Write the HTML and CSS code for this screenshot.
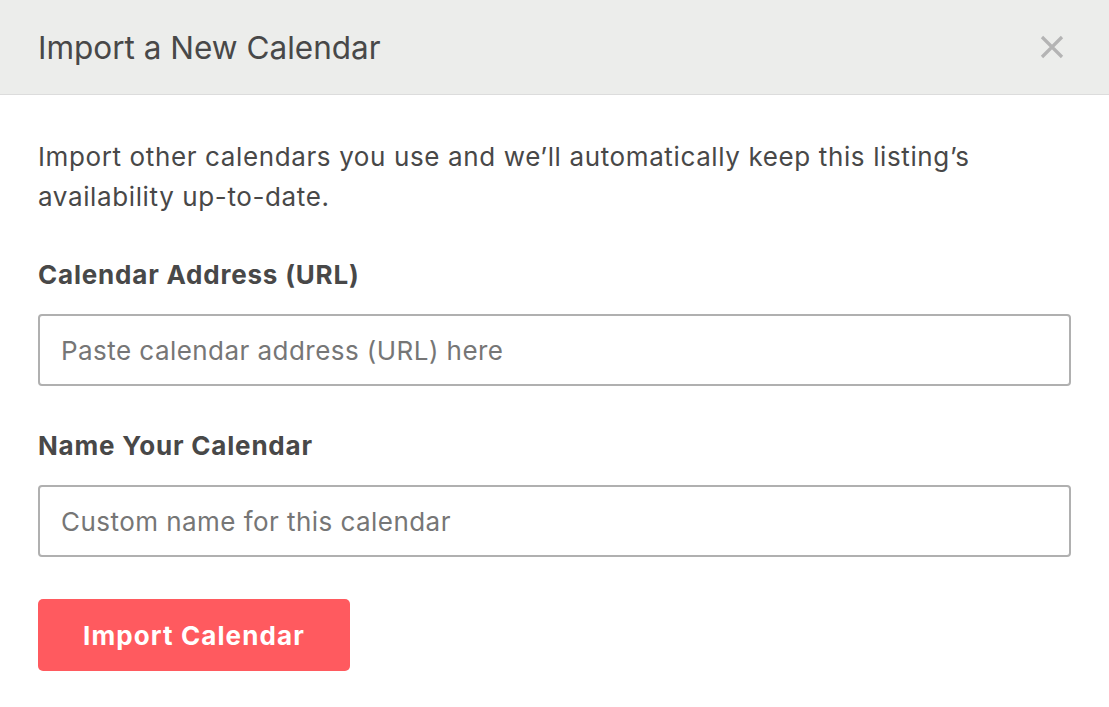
FILE: index.html
```html
<!DOCTYPE html>
<html lang="en">
<head>
<meta charset="utf-8">
<title>Import a New Calendar</title>
<link rel="stylesheet" href="styles.css">
</head>
<body>
<div class="modal">
  <header class="modal-header">
    <h1 class="modal-title">Import a New Calendar</h1>
    <button class="close" aria-label="Close">
      <svg width="24" height="24" viewBox="0 0 24 24"><path d="M2 2 L22 22 M22 2 L2 22" stroke="#b4b4b4" stroke-width="3.2" fill="none"/></svg>
    </button>
  </header>
  <div class="modal-body">
    <p class="intro">Import other calendars you use and we’ll automatically keep this listing’s availability up-to-date.</p>
    <label class="field-label" for="url">Calendar Address (URL)</label>
    <input class="field" id="url" type="text" placeholder="Paste calendar address (URL) here">
    <label class="field-label" for="name">Name Your Calendar</label>
    <input class="field" id="name" type="text" placeholder="Custom name for this calendar">
    <button class="primary">Import Calendar</button>
  </div>
</div>
</body>
</html>
```
FILE: styles.css
```css
html, body {
  margin: 0;
  padding: 0;
  background: #ffffff;
}
body {
  font-family: "Inter", "Liberation Sans", sans-serif;
  color: #484848;
  width: 1109px;
  height: 707px;
  overflow: hidden;
}
.modal-header {
  height: 94px;
  background: #ecedeb;
  border-bottom: 1px solid #dcdcdc;
  display: flex;
  align-items: center;
  justify-content: space-between;
  padding: 0 45px 0 38px;
}
.modal-title {
  margin: 0;
  font-size: 31.5px;
  font-weight: 400;
  color: #484848;
}
.close {
  border: 0;
  background: none;
  padding: 0;
  width: 24px;
  height: 24px;
  display: flex;
}
.modal-body {
  padding: 0 38px;
  display: flex;
  flex-direction: column;
}
.intro {
  margin: 42px 0 0;
  font-size: 26px;
  letter-spacing: 0.62px;
  line-height: 40px;
}
.field-label {
  margin-top: 38px;
  font-size: 26px;
  font-weight: 700;
  letter-spacing: 0.8px;
  line-height: 40px;
}
.field {
  margin-top: 19px;
  height: 72px;
  box-sizing: border-box;
  border: 2px solid #b0b0b0;
  border-radius: 4px;
  padding: 0 21px;
  font-family: inherit;
  font-size: 26px;
  letter-spacing: 0.45px;
  color: #484848;
}
.field::placeholder {
  color: #767676;
}
.field + .field-label {
  margin-top: 40px;
}
.primary {
  margin-top: 42px;
  align-self: flex-start;
  width: 312px;
  height: 72px;
  border: 0;
  border-radius: 5px;
  background: #ff5a5f;
  color: #ffffff;
  font-family: inherit;
  font-size: 26px;
  font-weight: 700;
  letter-spacing: 1.1px;
}
```
